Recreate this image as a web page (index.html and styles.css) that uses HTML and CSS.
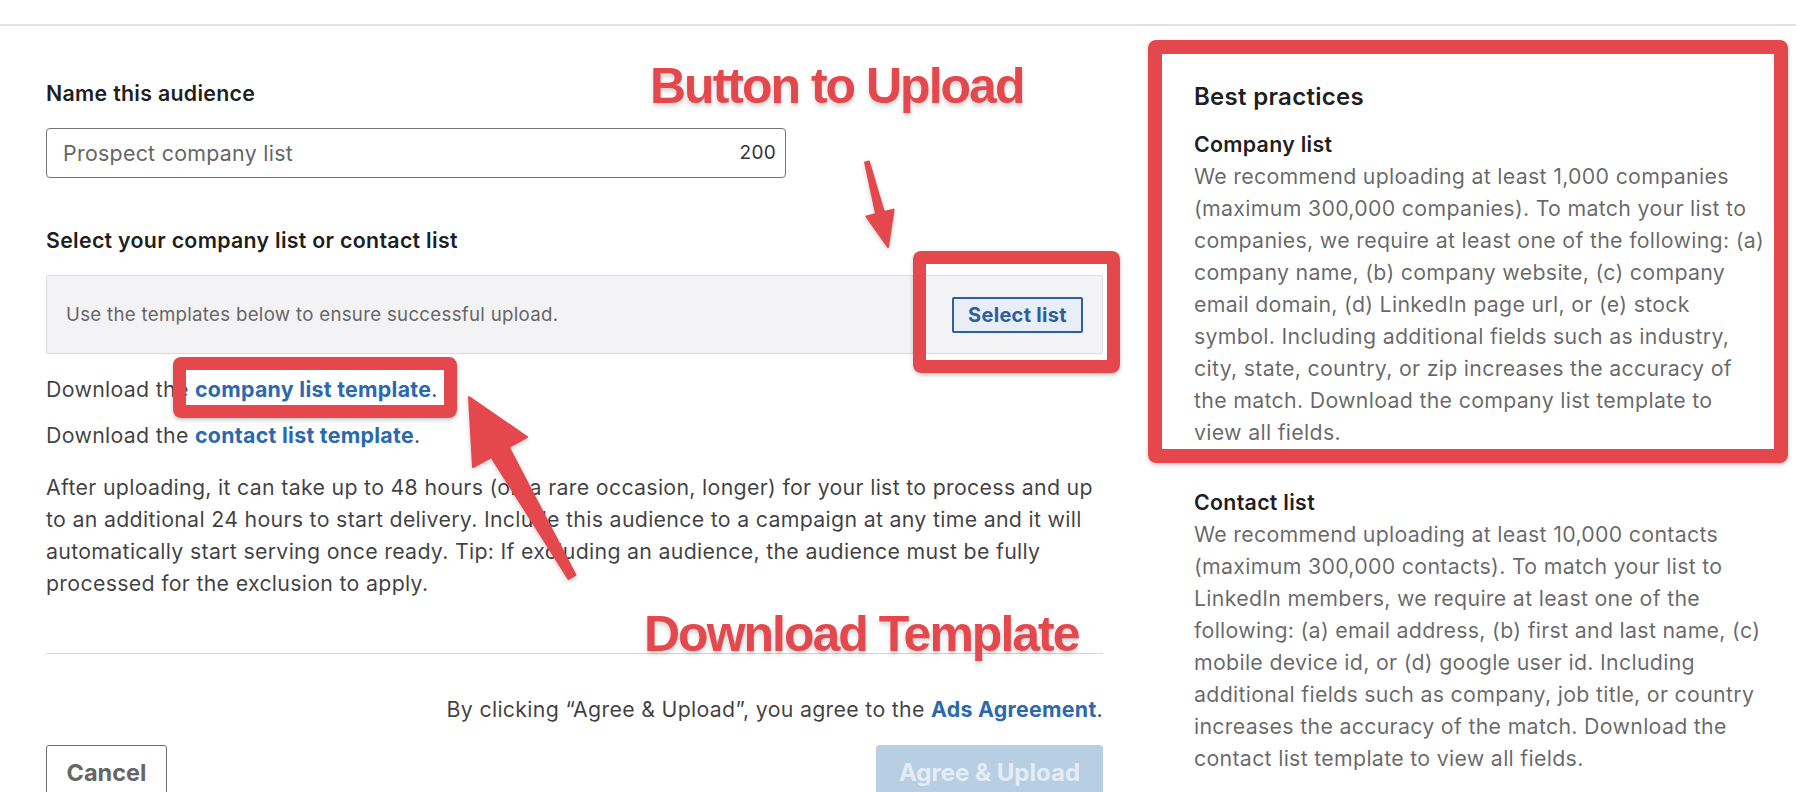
FILE: index.html
```html
<!DOCTYPE html>
<html lang="en">
<head>
<meta charset="utf-8">
<title>Upload audience list</title>
<link rel="stylesheet" href="styles.css">
</head>
<body>
<div class="topbar"></div>
<main class="page">
  <section class="form">
    <h3 class="label">Name this audience</h3>
    <div class="input">
      <span class="placeholder">Prospect company list</span>
      <span class="count">200</span>
    </div>
    <h3 class="label label-select">Select your company list or contact list</h3>
    <div class="upload-box">
      <span class="hint">Use the templates below to ensure successful upload.</span>
      <button class="btn-select">Select list</button>
    </div>
    <p class="dl">Download the <a class="link">company list template</a>.</p>
    <p class="dl">Download the <a class="link">contact list template</a>.</p>
    <p class="note">After uploading, it can take up to 48 hours (on a rare occasion, longer) for your list to process and up to an additional 24 hours to start delivery. Include this audience to a campaign at any time and it will automatically start serving once ready. Tip: If excluding an audience, the audience must be fully processed for the exclusion to apply.</p>
    <div class="divider"></div>
    <p class="agree">By clicking “Agree &amp; Upload”, you agree to the <a class="link">Ads Agreement</a>.</p>
    <div class="actions">
      <button class="btn-cancel">Cancel</button>
      <button class="btn-primary">Agree &amp; Upload</button>
    </div>
  </section>
  <aside class="tips">
    <h2 class="tips-title">Best practices</h2>
    <h4 class="tips-sub">Company list</h4>
    <p class="tips-text">We recommend uploading at least 1,000 companies (maximum 300,000 companies). To match your list to companies, we require at least one of the following: (a) company name, (b) company website, (c) company email domain, (d) LinkedIn page url, or (e) stock symbol. Including additional fields such as industry, city, state, country, or zip increases the accuracy of the match. Download the company list template to view all fields.</p>
    <h4 class="tips-sub tips-sub-2">Contact list</h4>
    <p class="tips-text">We recommend uploading at least 10,000 contacts (maximum 300,000 contacts). To match your list to LinkedIn members, we require at least one of the following: (a) email address, (b) first and last name, (c) mobile device id, or (d) google user id. Including additional fields such as company, job title, or country increases the accuracy of the match. Download the contact list template to view all fields.</p>
  </aside>
</main>

<div class="annot annot-text annot-upload">Button to Upload</div>
<div class="annot annot-text annot-download">Download Template</div>
<div class="annot annot-box box-tips"></div>
<div class="annot annot-box box-select"></div>
<div class="annot annot-box box-link"></div>
<svg class="annot arrows" width="1796" height="792" viewBox="0 0 1796 792">
  <polygon class="arrow" points="865.1,162.5 876.1,214 866.4,216.4 888,247 893.6,209.6 883.9,212 868.9,161.5"/>
  <polygon class="arrow" points="568.5,579 491.3,457 473,467 469,397 527,437 508.7,447 575.5,575"/>
</svg>
</body>
</html>
```

FILE: styles.css
```css
* { box-sizing: border-box; }

html, body {
  margin: 0;
  padding: 0;
  background: #ffffff;
}

body {
  position: relative;
  width: 1796px;
  height: 792px;
  overflow: hidden;
  font-family: "Inter", "Liberation Sans", sans-serif;
  font-size: 21.33px;
  line-height: 32px;
  letter-spacing: 0.3px;
  color: rgba(0, 0, 0, 0.75);
}

.topbar {
  height: 26px;
  border-bottom: 2px solid #e2e2e2;
}

.page {
  display: flex;
  align-items: flex-start;
}

.form {
  width: 1057px;
  margin-left: 46px;
  padding-top: 51px;
}

.label {
  margin: 0;
  font-size: 21.33px;
  line-height: 32px;
  font-weight: 600;
  color: rgba(0, 0, 0, 0.9);
}

.label-select {
  margin-top: 46px;
}

.input {
  margin-top: 19px;
  width: 740px;
  height: 50px;
  border: 1px solid #737373;
  border-radius: 4px;
  display: flex;
  align-items: center;
  justify-content: space-between;
  padding: 0 9px 0 16px;
}

.placeholder {
  color: #666666;
  font-size: 21.33px;
}

.count {
  color: #333333;
  font-size: 19px;
}

.upload-box {
  margin-top: 19px;
  height: 79px;
  background: #f3f3f5;
  border: 1px solid #dcdcdc;
  border-radius: 2px;
  display: flex;
  align-items: center;
  justify-content: space-between;
  padding: 0 19px;
}

.hint {
  font-size: 18.67px;
  color: #666666;
}

.btn-select {
  width: 131px;
  height: 36px;
  padding: 0;
  border: 2px solid #2d5f9c;
  border-radius: 2px;
  background: #e7eef7;
  color: #2d5f9c;
  font-family: "Inter", "Liberation Sans", sans-serif;
  font-size: 20px;
  font-weight: 700;
  letter-spacing: 0.3px;
  line-height: 32px;
}

.dl {
  margin: 19px 0 0;
}

.dl + .dl {
  margin-top: 14px;
}

.link {
  color: #2a69b0;
  font-weight: 700;
  text-decoration: none;
}

.note {
  margin: 20px 0 0;
}

.divider {
  margin-top: 54px;
  height: 1px;
  background: #d6d6d6;
}

.agree {
  margin: 39px 0 0;
  text-align: right;
}

.actions {
  margin-top: 20px;
  display: flex;
  justify-content: space-between;
}

.btn-cancel {
  width: 121px;
  height: 54px;
  padding: 0;
  border: 1px solid #6e6e6e;
  border-radius: 3px;
  background: #ffffff;
  color: #666666;
  font-family: "Inter", "Liberation Sans", sans-serif;
  font-size: 23.5px;
  font-weight: 700;
}

.btn-primary {
  width: 227px;
  height: 54px;
  padding: 0;
  border: none;
  border-radius: 4px;
  background: #b8cfe3;
  color: #e4edf6;
  font-family: "Inter", "Liberation Sans", sans-serif;
  font-size: 24px;
  font-weight: 700;
}

.tips {
  width: 572px;
  margin-left: 91px;
  padding-top: 55px;
}

.tips-title {
  margin: 0;
  font-size: 24px;
  line-height: 32px;
  font-weight: 600;
  color: rgba(0, 0, 0, 0.9);
}

.tips-sub {
  margin: 15px 0 0;
  font-size: 21.33px;
  line-height: 32px;
  font-weight: 600;
  color: rgba(0, 0, 0, 0.9);
}

.tips-sub-2 {
  margin-top: 38px;
}

.tips-text {
  margin: 0;
  color: rgba(0, 0, 0, 0.6);
}

/* ---------- annotations (overlay) ---------- */
.annot {
  position: absolute;
}

.annot-text {
  font-family: "Liberation Sans", Arial, sans-serif;
  font-weight: 700;
  font-size: 50px;
  line-height: 50px;
  letter-spacing: -2px;
  color: #e4484d;
  text-shadow: 0 3px 4px rgba(0, 0, 0, 0.18);
  white-space: nowrap;
}

.annot-upload {
  left: 650px;
  top: 61px;
}

.annot-download {
  left: 644px;
  top: 609px;
}

.annot-box {
  border-style: solid;
  border-color: #e4484d;
  border-radius: 8px;
  box-shadow: 0 2px 4px rgba(0, 0, 0, 0.22);
}

.box-tips {
  left: 1148px;
  top: 40px;
  width: 640px;
  height: 423px;
  border-width: 14px;
}

.box-select {
  left: 913px;
  top: 251px;
  width: 207px;
  height: 122px;
  border-width: 13px;
}

.box-link {
  left: 173px;
  top: 357px;
  width: 284px;
  height: 61px;
  border-width: 13px;
}

.arrows {
  left: 0;
  top: 0;
  pointer-events: none;
  overflow: visible;
}

.arrow {
  fill: #e4484d;
  stroke: #e4484d;
  stroke-width: 2;
  stroke-linejoin: round;
  filter: drop-shadow(0 2px 2px rgba(0, 0, 0, 0.2));
}
```
